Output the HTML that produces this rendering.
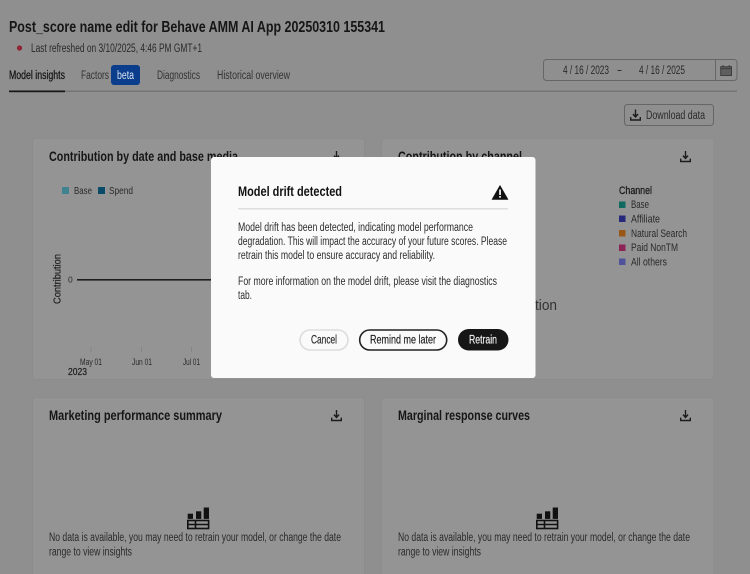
<!DOCTYPE html>
<html lang="en"><head><meta charset="utf-8"><title>Model drift detected</title>
<style>
html,body{margin:0;padding:0;width:750px;height:574px;overflow:hidden;background:#8f8f8f}
svg{display:block;filter:blur(.35px)}
text{font-family:"Liberation Sans",sans-serif;font-size:11.5px;fill:#262626}
.h{font-weight:700;font-size:13.5px;fill:#161616}
.m{fill:#2a2a2a}
.g{fill:#333}
.b{stroke-width:.25px}
</style></head><body>
<svg width="750" height="574" viewBox="0 0 750 574" xmlns="http://www.w3.org/2000/svg">
<defs>
<g id="dl" fill="none" stroke="#1c1c1c" stroke-width="1.4"><path d="M5.5 0V7"/><path d="M3 4.6L5.5 7.4L8 4.6" stroke-width="1.5"/><path d="M0.7 7.6V10.5H10.3V7.6"/></g>
<g id="tb"><rect x="0.7" y="6.2" width="5.3" height="5.2" fill="#111"/><rect x="9" y="3.8" width="5.3" height="7.6" fill="#111"/><rect x="16.7" y="0" width="5.3" height="11.4" fill="#111"/><g fill="none" stroke="#111" stroke-width="1.6"><rect x="0.8" y="13" width="20.8" height="8"/><path d="M0.8 17H21.6M8.5 13V21"/></g></g>
</defs>
<rect width="750" height="574" fill="#8f8f8f"/>
<text x="9" y="32" class="h" style="font-size:15.5px" textLength="376" lengthAdjust="spacingAndGlyphs">Post_score name edit for Behave AMM AI App 20250310 155341</text>
<circle cx="19.5" cy="48" r="2.6" fill="#8f2433"/>
<text x="31" y="52" class="m" textLength="171" lengthAdjust="spacingAndGlyphs">Last refreshed on 3/10/2025, 4:46 PM GMT+1</text>
<text x="9" y="79" style="fill:#111;stroke:#111;stroke-width:.2px" textLength="56" lengthAdjust="spacingAndGlyphs">Model insights</text>
<text x="81" y="79" class="g" textLength="28" lengthAdjust="spacingAndGlyphs">Factors</text>
<rect x="111" y="65" width="29" height="20" rx="3" fill="#0a3d8c"/>
<text x="117" y="79" style="fill:#d8e2f2" textLength="17" lengthAdjust="spacingAndGlyphs">beta</text>
<text x="157" y="79" class="g" textLength="43" lengthAdjust="spacingAndGlyphs">Diagnostics</text>
<text x="217" y="79" class="g" textLength="73" lengthAdjust="spacingAndGlyphs">Historical overview</text>
<rect x="9" y="90.5" width="728" height="1.5" fill="#767676"/>
<rect x="9" y="90.5" width="56" height="1.7" fill="#161616"/>

<rect x="543.5" y="59.5" width="193.5" height="21" rx="3" fill="none" stroke="#666"/>
<path d="M715.5 60V80.5" stroke="#666"/>
<text x="563" y="74" class="m" textLength="46" lengthAdjust="spacingAndGlyphs">4 / 16 / 2023</text>
<rect x="617.5" y="70" width="4" height="1" fill="#333"/>
<text x="639" y="74" class="m" textLength="46" lengthAdjust="spacingAndGlyphs">4 / 16 / 2025</text>
<rect x="720.7" y="66.7" width="10.8" height="8.8" fill="#5e5e5e" stroke="#3e3e3e" stroke-width="1"/>
<path d="M723 65V67M729.2 65V67M721 68.6H731" stroke="#3e3e3e" stroke-width="1" fill="none"/>

<rect x="624.5" y="104.5" width="89" height="21" rx="3" fill="none" stroke="#666"/>
<use href="#dl" x="630" y="109.5"/>
<text x="646" y="119" class="m" textLength="59" lengthAdjust="spacingAndGlyphs">Download data</text>

<g fill="#949494" stroke="#8c8c8c">
<rect x="32.5" y="138.5" width="332" height="241" rx="3"/>
<rect x="381.5" y="138.5" width="332.5" height="241" rx="3"/>
<rect x="32.5" y="397.5" width="332" height="190" rx="3"/>
<rect x="381.5" y="397.5" width="332.5" height="190" rx="3"/>
</g>

<text x="49" y="161" class="h" textLength="189" lengthAdjust="spacingAndGlyphs">Contribution by date and base media</text>
<use href="#dl" x="331" y="151"/>
<text x="398" y="161" class="h" textLength="124" lengthAdjust="spacingAndGlyphs">Contribution by channel</text>
<use href="#dl" x="680" y="151"/>

<rect x="62" y="187" width="7" height="7" fill="#3f8391"/>
<text x="74" y="194" class="m" style="font-size:10.5px" textLength="18" lengthAdjust="spacingAndGlyphs">Base</text>
<rect x="98" y="187" width="7" height="7" fill="#0a4b69"/>
<text x="109" y="194" class="m" style="font-size:10.5px" textLength="24" lengthAdjust="spacingAndGlyphs">Spend</text>
<text transform="translate(60.5 304) rotate(-90)" style="font-size:10.5px;fill:#222;stroke:#222;stroke-width:.25px" textLength="50" lengthAdjust="spacingAndGlyphs">Contribution</text>
<text x="68" y="282.5" class="m" style="font-size:8.5px">0</text>
<rect x="77" y="279" width="135" height="1.6" fill="#1e1e1e"/>
<path d="M91 347V352M141.5 347V352M191.5 347V352" stroke="#858585"/>
<text x="80" y="365" class="m" style="font-size:9.5px" textLength="22" lengthAdjust="spacingAndGlyphs">May 01</text>
<text x="132" y="365" class="m" style="font-size:9.5px" textLength="20" lengthAdjust="spacingAndGlyphs">Jun 01</text>
<text x="183" y="365" class="m" style="font-size:9.5px" textLength="17" lengthAdjust="spacingAndGlyphs">Jul 01</text>
<text x="68" y="375" style="font-size:10px;fill:#222;stroke:#222;stroke-width:.25px" textLength="19" lengthAdjust="spacingAndGlyphs">2023</text>

<text x="619" y="194" style="font-size:11px;fill:#161616;stroke:#161616;stroke-width:.25px" textLength="33" lengthAdjust="spacingAndGlyphs">Channel</text>
<rect x="619" y="201.5" width="6.5" height="6.5" fill="#106a61"/>
<text x="631" y="208" class="m" style="font-size:11px" textLength="18" lengthAdjust="spacingAndGlyphs">Base</text>
<rect x="619" y="215.5" width="6.5" height="6.5" fill="#26287c"/>
<text x="631" y="222.5" class="m" style="font-size:11px" textLength="29" lengthAdjust="spacingAndGlyphs">Affiliate</text>
<rect x="619" y="230" width="6.5" height="6.5" fill="#985716"/>
<text x="631" y="237" class="m" style="font-size:11px" textLength="56" lengthAdjust="spacingAndGlyphs">Natural Search</text>
<rect x="619" y="244.5" width="6.5" height="6.5" fill="#8c2455"/>
<text x="631" y="251" class="m" style="font-size:11px" textLength="47" lengthAdjust="spacingAndGlyphs">Paid NonTM</text>
<rect x="619" y="258.5" width="6.5" height="6.5" fill="#50529c"/>
<text x="631" y="265.5" class="m" style="font-size:11px" textLength="36" lengthAdjust="spacingAndGlyphs">All others</text>
<text x="535" y="310" style="font-size:15px;fill:#333" textLength="22" lengthAdjust="spacingAndGlyphs">tion</text>

<text x="49" y="420" class="h" textLength="173" lengthAdjust="spacingAndGlyphs">Marketing performance summary</text>
<use href="#dl" x="331" y="410"/>
<use href="#tb" x="187" y="507.5"/>
<text x="49" y="541" class="m" textLength="292" lengthAdjust="spacingAndGlyphs">No data is available, you may need to retrain your model, or change the date</text>
<text x="49" y="555.5" class="m" textLength="83" lengthAdjust="spacingAndGlyphs">range to view insights</text>

<text x="398" y="420" class="h" textLength="132" lengthAdjust="spacingAndGlyphs">Marginal response curves</text>
<use href="#dl" x="680" y="410"/>
<use href="#tb" x="536" y="507.5"/>
<text x="398" y="541" class="m" textLength="292" lengthAdjust="spacingAndGlyphs">No data is available, you may need to retrain your model, or change the date</text>
<text x="398" y="555.5" class="m" textLength="83" lengthAdjust="spacingAndGlyphs">range to view insights</text>

<rect x="211" y="157" width="324.5" height="221" rx="3" fill="#fafafa"/>
<text x="238" y="196" style="font-size:14px;font-weight:700;fill:#111" textLength="104" lengthAdjust="spacingAndGlyphs">Model drift detected</text>
<path d="M500 185.5L508 199.5H492Z" fill="#111" stroke="#111" stroke-linejoin="round" stroke-width=".6"/>
<rect x="499.2" y="189.5" width="1.7" height="5.5" fill="#fafafa"/>
<rect x="499.2" y="196" width="1.7" height="1.7" fill="#fafafa"/>
<rect x="238" y="208" width="270" height="1.5" fill="#dedede"/>
<text x="238" y="231" style="fill:#2c2c2c" textLength="235" lengthAdjust="spacingAndGlyphs">Model drift has been detected, indicating model performance</text>
<text x="238" y="245" style="fill:#2c2c2c" textLength="269" lengthAdjust="spacingAndGlyphs">degradation. This will impact the accuracy of your future scores. Please</text>
<text x="238" y="259" style="fill:#2c2c2c" textLength="197" lengthAdjust="spacingAndGlyphs">retrain this model to ensure accuracy and reliability.</text>
<text x="238" y="285" style="fill:#2c2c2c" textLength="259" lengthAdjust="spacingAndGlyphs">For more information on the model drift, please visit the diagnostics</text>
<text x="238" y="299" style="fill:#2c2c2c" textLength="14" lengthAdjust="spacingAndGlyphs">tab.</text>
<rect x="300" y="330" width="48" height="20" rx="10" fill="none" stroke="#dcdcdc" stroke-width="1.6"/>
<text x="311" y="343.5" style="font-size:11.5px;fill:#2c2c2c;stroke:#2c2c2c;stroke-width:.2px" textLength="26" lengthAdjust="spacingAndGlyphs">Cancel</text>
<rect x="359.7" y="330" width="87" height="20" rx="10" fill="none" stroke="#222" stroke-width="1.6"/>
<text x="370" y="343.5" style="font-size:11.5px;fill:#222;stroke:#222;stroke-width:.2px" textLength="66" lengthAdjust="spacingAndGlyphs">Remind me later</text>
<rect x="458" y="329" width="50.5" height="21.5" rx="10.7" fill="#161616"/>
<text x="469" y="343.5" style="font-size:11.5px;fill:#f0f0f0;stroke:#f0f0f0;stroke-width:.2px" textLength="28" lengthAdjust="spacingAndGlyphs">Retrain</text>
</svg>
</body></html>
